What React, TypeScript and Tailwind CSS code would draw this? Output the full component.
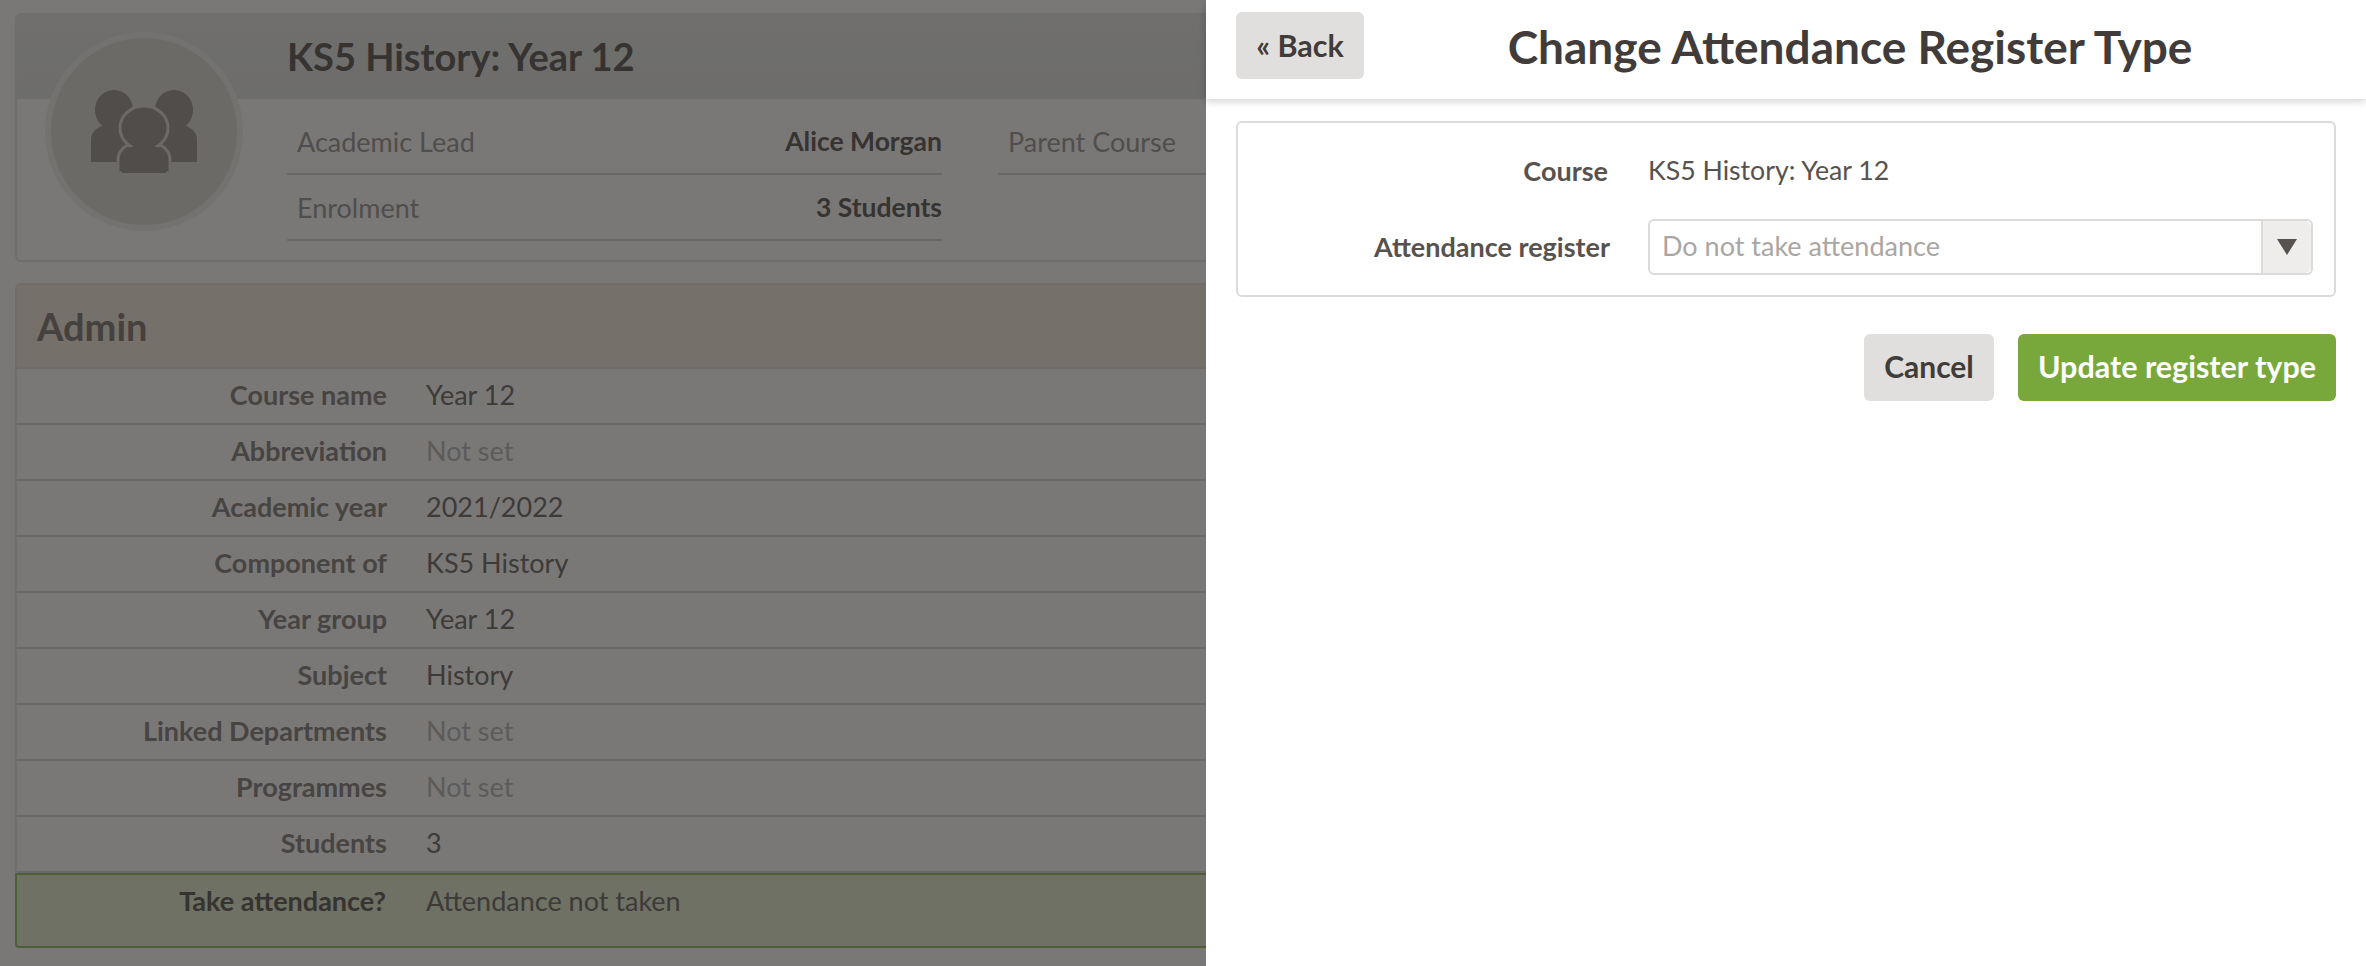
const font = "font-['Lato','Noto_Sans',sans-serif]"

const rows = [
  { label: "Course name", value: "Year 12" },
  { label: "Abbreviation", value: "Not set", muted: true },
  { label: "Academic year", value: "2021/2022" },
  { label: "Component of", value: "KS5 History" },
  { label: "Year group", value: "Year 12" },
  { label: "Subject", value: "History" },
  { label: "Linked Departments", value: "Not set", muted: true },
  { label: "Programmes", value: "Not set", muted: true },
  { label: "Students", value: "3" },
]

function PeopleIcon() {
  return (
    <svg width="106" height="83" viewBox="0 0 106 83" className="block">
      <g fill="#a09a94">
        <ellipse cx="23" cy="20" rx="19" ry="20" />
        <path d="M0 72 V50 C0 40 10 34 23 34 C36 34 46 40 46 50 V72 Z" />
        <ellipse cx="83" cy="20" rx="19" ry="20" />
        <path d="M60 72 V50 C60 40 70 34 83 34 C96 34 106 40 106 50 V72 Z" />
      </g>
      <g fill="#a09a94" stroke="#d6d5cf" strokeWidth="3">
        <path d="M27 83 V70 C27 58 38 52 53 52 C68 52 79 58 79 70 V83 Z" />
        <ellipse cx="53" cy="38" rx="24" ry="22" />
      </g>
      <path d="M31 83 V70 C31 60 40 55 53 55 C66 55 75 60 75 70 V83 Z" fill="#a09a94" />
    </svg>
  )
}

function InfoRow({ label, value }: { label: string; value?: string }) {
  return (
    <div className="flex h-[66px] items-center justify-between border-b-2 border-[#d2d0ce] pl-[10px] pt-[2px]">
      <span className="text-[27px] text-[#a09c98]">{label}</span>
      {value && <span className="text-[26.5px] font-bold text-[#6c6763]">{value}</span>}
    </div>
  )
}

function Background() {
  return (
    <div className="flex h-[966px] flex-col gap-[21px] overflow-hidden bg-[#f2f1ef] pl-[15px] pt-[13px]">
      <div className="relative h-[249px] w-[2340px] shrink-0 rounded-md border-2 border-[#dedcda]">
        <div className="flex h-[84px] items-center bg-gradient-to-b from-[#dfdedc] to-[#dbdad8] pb-[2px] pl-[270px] text-[38px] font-bold text-[#6c6763]">
          KS5 History: Year 12
        </div>
        <div className="flex gap-[56px] pl-[270px] pt-[10px]">
          <div className="w-[655px]">
            <InfoRow label="Academic Lead" value="Alice Morgan" />
            <InfoRow label="Enrolment" value="3 Students" />
          </div>
          <div className="w-[655px]">
            <InfoRow label="Parent Course" />
          </div>
        </div>
        <div className="absolute left-[28px] top-[17px] flex h-[199px] w-[198px] items-center justify-center rounded-full border-[6px] border-[#e6e5e2] bg-[#d6d5cf]">
          <PeopleIcon />
        </div>
      </div>
      <div className="w-[2340px] shrink-0">
        <div className="flex h-[86px] items-center rounded-t-md border-2 border-[#e2d8ce] bg-[#ede0d5] pl-[20px] text-[38px] font-bold text-[#8a837e]">
          Admin
        </div>
        <div className="border-x-2 border-[#dedcda]">
          {rows.map((r) => (
            <div key={r.label} className="flex h-[56px] items-center border-b-2 border-[#d6d4d2] pb-[1px] text-[27px]">
              <div className="w-[370px] shrink-0 text-right font-bold text-[#8f8985]">{r.label}</div>
              <div className={`pl-[39px] ${r.muted ? "text-[#bab7b4]" : "text-[#7a7571]"}`}>{r.value}</div>
            </div>
          ))}
        </div>
        <div className="flex h-[75px] items-start rounded-b-sm border-2 border-[#9dbd6c] bg-[#dde2c9] pt-[6px] text-[27px]">
          <div className="w-[369px] shrink-0 text-right font-bold text-[#6c6763]">Take attendance?</div>
          <div className="pl-[40px] text-[#7a7571]">Attendance not taken</div>
        </div>
      </div>
    </div>
  )
}

export default function App() {
  return (
    <div className={`relative h-[966px] w-[2366px] overflow-hidden ${font}`}>
      <Background />
      <div className="absolute inset-0 bg-black/50" />
      <div className="absolute inset-y-0 left-[1206px] right-0 bg-white text-[#413c39]">
        <div className="relative flex h-[99px] items-center justify-center shadow-[0_2px_8px_rgba(0,0,0,0.2)]">
          <button className="absolute left-[30px] top-[12px] h-[67px] w-[128px] rounded-md bg-[#e0dfdd] text-[30.5px] font-bold text-[#413c39]">
            « Back
          </button>
          <h1 className="pb-[7px] pl-[128px] text-[46px] font-bold">Change Attendance Register Type</h1>
        </div>
        <div className="mx-[30px] mt-[22px] h-[176px] rounded-md border-2 border-[#dcdbd9] pl-[410px] pr-[21px] text-[27px]">
          <div className="relative flex h-[96px] items-center">
            <span className="absolute -left-[352px] w-[312px] text-right font-bold text-[#57524e]">Course</span>
            <span className="pb-[1px] text-[26.7px] text-[#57524e]">KS5 History: Year 12</span>
          </div>
          <div className="relative flex h-[56px] rounded-md border-2 border-[#dcdbd9]">
            <span className="absolute -left-[352px] top-[6px] w-[312px] text-right font-bold text-[#57524e]">Attendance register</span>
            <span className="flex flex-1 items-center pb-[1px] pl-[12px] text-[#a9a6a3]">Do not take attendance</span>
            <span className="flex w-[50px] items-center justify-center rounded-r-md border-l-2 border-[#dcdbd9] bg-[#eeedeb]">
              <svg width="20" height="16" viewBox="0 0 20 16"><path d="M0 0 H20 L10 16 Z" fill="#57524e" /></svg>
            </span>
          </div>
        </div>
        <div className="mr-[30px] mt-[37px] flex justify-end gap-[24px]">
          <button className="h-[67px] w-[130px] rounded-md bg-[#e0dfdd] pb-[2px] text-[30px] font-bold text-[#413c39]">Cancel</button>
          <button className="h-[67px] w-[318px] rounded-md bg-[#78a83c] pb-[2px] text-[30.5px] font-bold text-white">Update register type</button>
        </div>
      </div>
    </div>
  )
}
